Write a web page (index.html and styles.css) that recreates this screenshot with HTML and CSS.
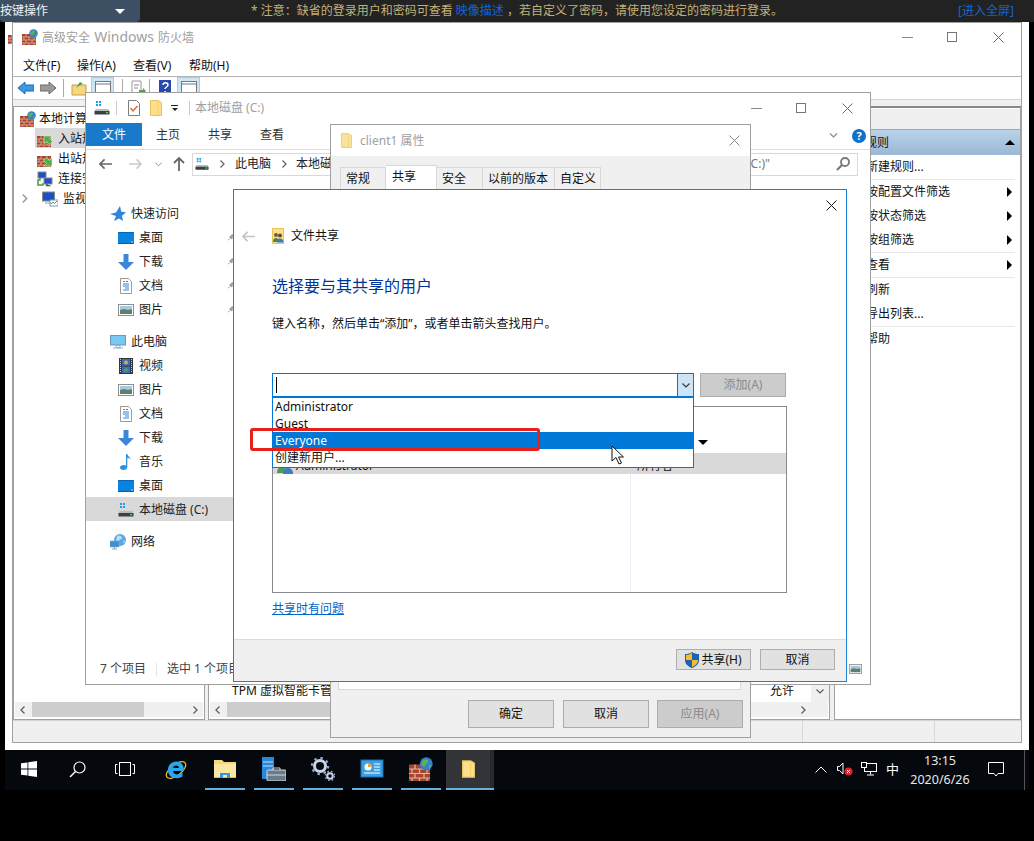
FILE: index.html
```html
<!DOCTYPE html>
<html lang="zh-CN">
<head>
<meta charset="utf-8">
<title>文件共享</title>
<link rel="stylesheet" href="styles.css">
</head>
<body>
<svg class="defs" aria-hidden="true">
  <symbol id="bricks" viewBox="0 0 16 16">
    <rect x="0" y="5" width="14" height="11" fill="#a8452f"/>
    <path d="M0 8h14M0 11h14M0 14h14M4 5v3M10 5v3M2 8v3M7 8v3M12 8v3M4 11v3M10 11v3M2 14v2M7 14v2M12 14v2" stroke="#e0b8a0" stroke-width=".8" fill="none"/>
  </symbol>
  <symbol id="firewall" viewBox="0 0 16 16">
    <use href="#bricks"/>
    <circle cx="11.5" cy="4.5" r="4.3" fill="#2f7fd6"/>
    <path d="M9 2.5c2-1.5 4-1 4 .5s-2 1-2 2.500-2 1-2.800-.5zM13 5l2 .5-1.500 2.500z" fill="#62b04a"/>
  </symbol>
  <symbol id="inbound" viewBox="0 0 16 16">
    <use href="#bricks"/>
    <path d="M7 5l8 0-2.500 2.500 3 3-3 3-3-3L7 13z" fill="#4fb04a" stroke="#e8f5e0" stroke-width=".5"/>
  </symbol>
  <symbol id="outbound" viewBox="0 0 16 16">
    <use href="#bricks"/>
    <path d="M15 15l-8 0 2.500-2.500-3-3 3-3 3 3L15 7z" fill="#4fb04a" stroke="#e8f5e0" stroke-width=".5"/>
  </symbol>
  <symbol id="connect" viewBox="0 0 16 16">
    <rect x="1" y="1" width="8" height="6" fill="#1a50c8" stroke="#8a8a8a"/>
    <rect x="7" y="7" width="8" height="6" fill="#1a50c8" stroke="#8a8a8a"/>
    <path d="M3 7v2h-2v5h5v-2" stroke="#4a9a3a" fill="none" stroke-width="1.500"/>
    <path d="M9 13v2h5" stroke="#9a9a9a"/>
  </symbol>
  <symbol id="monitor" viewBox="0 0 16 16">
    <rect x=".5" y="1" width="12" height="9" fill="#1a50c8" stroke="#8a8a8a"/>
    <rect x="8" y="9" width="8" height="6" fill="#fff" stroke="#7a9ac0"/>
    <path d="M9 13l2-2 1.500 1.500L15 10" stroke="#4aa03a" fill="none"/>
    <path d="M3 12h6" stroke="#9a9a9a"/>
  </symbol>
  <symbol id="drive" viewBox="0 0 16 16">
    <path d="M2 1h2v2H2zM5 1h2v2H5zM2 4h2v2H2zM5 4h2v2H5z" fill="#18a0e8"/>
    <path d="M1.500 9h13l1 2.500H.5z" fill="#b8bcc0"/>
    <rect x=".5" y="11" width="15" height="3.500" rx=".5" fill="#3c3f44"/>
    <rect x="12" y="12" width="2" height="1.300" fill="#50e060"/>
  </symbol>
  <symbol id="folder" viewBox="0 0 12 16">
    <path d="M.5.5h7.500l3.500 2v13H.5z" fill="#fbdf8a" stroke="#e6c35e"/>
    <path d="M8 2v13" stroke="#f2cf6c"/>
  </symbol>
  <symbol id="check" viewBox="0 0 12 16">
    <path d="M.5.5h8l3 3v12H.5z" fill="#fff" stroke="#7e7e7e"/>
    <path d="M2.500 8l2.500 3 4.500-5" stroke="#e0632a" stroke-width="1.400" fill="none"/>
  </symbol>
  <symbol id="desk" viewBox="0 0 16 12">
    <rect x="0" y="0" width="16" height="12" fill="#0a82e0"/>
    <rect x="0" y="0" width="16" height="1" fill="#0868b4"/>
    <path d="M0 12h16v-1H0z" fill="#0460a8"/><path d="M13 10h2" stroke="#9fd2f5"/>
  </symbol>
  <symbol id="down" viewBox="0 0 16 16">
    <path d="M5.500 0h5v8H16l-8 8-8-8h5.500z" fill="#3b87d8"/>
  </symbol>
  <symbol id="doc" viewBox="0 0 12 16">
    <path d="M.5.5h8l3 3v12H.5z" fill="#fff" stroke="#9a9a9a"/>
    <path d="M6 3.500h2M3 6h6M3 8h6M5 10h4M3 12h6" stroke="#2f88d8"/>
    <path d="M3 3.500h2" stroke="#888"/>
  </symbol>
  <symbol id="pics" viewBox="0 0 16 12">
    <rect x=".5" y=".5" width="15" height="11" fill="#fff" stroke="#8e8e8e"/>
    <rect x="2" y="2" width="12" height="4" fill="#a6c8e4"/>
    <path d="M2 6l4-1 4 1 4-1v5H2z" fill="#5b8268"/>
  </symbol>
  <symbol id="pc" viewBox="0 0 16 14">
    <rect x=".5" y=".5" width="15" height="9.500" fill="#79c8f2" stroke="#6a98b8"/>
    <path d="M6 10.500h4v2H6zM3 13h10" stroke="#8fb3c8" fill="none"/>
  </symbol>
  <symbol id="video" viewBox="0 0 14 16">
    <rect x="0" y="0" width="14" height="16" fill="#33363a"/>
    <rect x="3" y="1" width="8" height="6.500" fill="#3c6cc0"/>
    <rect x="3" y="8.500" width="8" height="6.500" fill="#3c6cc0"/>
    <circle cx="7" cy="4.500" r="2" fill="#d8a838"/><circle cx="7" cy="12" r="1.800" fill="#58a048"/>
    <path d="M1.500 1v14M12.500 1v14" stroke="#d0d0d0" stroke-dasharray="1 1"/>
  </symbol>
  <symbol id="note" viewBox="0 0 12 16">
    <path d="M6 0h1.300c.3 2.500 3 3 3.700 5.500-1-1-2.500-1.500-3.700-1.700V13c0 2-2 3-4 3S0 15 0 13.500 2 11 3.800 11c.8 0 1.600.2 2.200.5z" fill="#2d8fe0"/>
  </symbol>
  <symbol id="net" viewBox="0 0 16 16">
    <circle cx="10" cy="6" r="6" fill="#58a8e4"/>
    <path d="M7 2c2-1 5 0 5 2s-3 1-3 3-2 0-3-1zM13 7l2-.5-1 3z" fill="#b8dcf4"/>
    <rect x="0" y="7" width="9" height="6" fill="#3f8fd0" stroke="#7aa8c8" stroke-width=".6"/>
    <path d="M2 15h5M4.500 13v2" stroke="#8aa8bc"/>
  </symbol>
  <symbol id="star" viewBox="0 0 16 16">
    <path d="M10 0l1.200 5.500L16 6.500l-4 3.300 1 5.200-4-2.500-5 2.500 2-5L0 8l6-1.500z" fill="#2f86d8"/>
  </symbol>
  <symbol id="share" viewBox="0 0 12 16">
    <rect x=".5" y=".5" width="11" height="15" fill="#fbe08a" stroke="#e8c45c"/>
    <circle cx="4" cy="7" r="2" fill="#7a5a3a"/><path d="M1 14c0-3 1-4 3-4s3 1 3 4z" fill="#3f8a50"/>
    <circle cx="8" cy="7.500" r="2" fill="#6a4a30"/><path d="M5 14.500c0-3 1-4 3-4s3.500 1 3.500 4z" fill="#3a7cc0"/>
  </symbol>
  <symbol id="users" viewBox="0 0 16 16">
    <circle cx="5" cy="6" r="3" fill="#8a6a48"/><path d="M0 15c0-4 2-6 5-6s5 2 5 6z" fill="#4f9a58"/>
    <circle cx="11" cy="7" r="3" fill="#6a4a30"/><path d="M6 16c0-4 2-6 5-6s5 2 5 6z" fill="#3a7cc0"/>
  </symbol>
  <symbol id="shield" viewBox="0 0 14 16">
    <path d="M7 0c2 1.500 4 2 7 2v6c0 4-3 6.500-7 8-4-1.500-7-4-7-8V2c3 0 5-.5 7-2z" fill="#1d62b0"/>
    <path d="M7 1v7H1V3c2.500 0 4-1 6-2zM7 8h6c0 3.500-2.500 5.500-6 7z" fill="#f5bd2e"/>
  </symbol>
  <symbol id="ie" viewBox="0 0 24 24">
    <ellipse cx="12" cy="13" rx="11.500" ry="5.500" transform="rotate(-38 12 13)" fill="none" stroke="#e8b820" stroke-width="1.300"/>
    <path d="M4 13c0-5 3.500-8.500 8.500-8.500S20 8.500 20 14H9c.3 4 6 4.500 9.500 1.500v4c-4 2.500-9 2-12-.3C4.800 17.700 4 15.500 4 13zM9 11h6c-.2-3.300-5.700-3.300-6 0z" fill="#2aa6ea"/>
  </symbol>
  <symbol id="explorer" viewBox="0 0 24 24">
    <path d="M1 3h8l2 2h12v3H1z" fill="#f6d77c"/>
    <rect x="1" y="7" width="22" height="14" fill="#fbe7a0"/>
    <path d="M1 21h22v-1H1z" fill="#dcb95c"/>
    <path d="M7 21v-5h10v5h-3v-3h-4v3z" fill="#2f9be8"/>
    <path d="M7 16h10v2H7z" fill="#2f9be8"/>
  </symbol>
  <symbol id="server" viewBox="0 0 24 24">
    <rect x="0" y="0" width="12" height="22" fill="#2a88d8"/>
    <path d="M1 5h10M1 9h10" stroke="#bfe0f8"/>
    <rect x="5" y="13" width="19" height="11" rx="1" fill="#6a7a88" stroke="#d0d8e0"/>
    <path d="M11 13v-2h7v2M5 18h19" stroke="#d0d8e0" fill="none"/>
  </symbol>
  <symbol id="gears" viewBox="0 0 24 24">
    <circle cx="9" cy="9" r="5.500" fill="none" stroke="#c8d4e4" stroke-width="3"/>
    <circle cx="9" cy="9" r="8" fill="none" stroke="#93a6c4" stroke-width="2.400" stroke-dasharray="2.500 3.800"/>
    <circle cx="19" cy="19" r="2.800" fill="none" stroke="#c8d4e4" stroke-width="2"/>
    <circle cx="19" cy="19" r="4.500" fill="none" stroke="#93a6c4" stroke-width="1.600" stroke-dasharray="1.600 2"/>
  </symbol>
  <symbol id="panel" viewBox="0 0 24 24">
    <rect x="1" y="3" width="22" height="17" fill="#3aa0e4" stroke="#1a70b0"/>
    <circle cx="8" cy="10" r="3.500" fill="#fff"/><path d="M8 10V6.500A3.500 3.500 0 0 1 11.500 10z" fill="#f0a030"/>
    <path d="M14 7h6M14 10h6M14 13h6M4 16h16" stroke="#fff"/>
  </symbol>
  <symbol id="cursor" viewBox="0 0 14 21">
    <path d="M1 1v15l4-3.500L8 19l2.500-1-3-6H12.500z" fill="#fff" stroke="#111" stroke-width="1"/>
  </symbol>
  <symbol id="arrow-left" viewBox="0 0 14 12">
    <path d="M6 1L1 6l5 5M1 6h13" fill="none" stroke="currentColor" stroke-width="1.800"/>
  </symbol>
  <symbol id="arrow-right" viewBox="0 0 14 12">
    <path d="M8 1l5 5-5 5M13 6H0" fill="none" stroke="currentColor" stroke-width="1.800"/>
  </symbol>
  <symbol id="arrow-up" viewBox="0 0 12 14">
    <path d="M1 6l5-5 5 5M6 1v13" fill="none" stroke="currentColor" stroke-width="1.800"/>
  </symbol>
  <symbol id="x" viewBox="0 0 11 11"><path d="M.5.5l10 10M10.500.5l-10 10" stroke="currentColor" fill="none"/></symbol>
  <symbol id="chev" viewBox="0 0 8 5"><path d="M.5.5L4 4 7.500.5" stroke="currentColor" fill="none" stroke-width="1.100"/></symbol>
  <symbol id="chev-r" viewBox="0 0 5 8"><path d="M.5.5L4 4 .5 7.500" stroke="currentColor" fill="none" stroke-width="1.300"/></symbol>
  <symbol id="chev-l" viewBox="0 0 5 8"><path d="M4.500.5L1 4l3.500 3.500" stroke="currentColor" fill="none" stroke-width="1.300"/></symbol>
  <symbol id="tri-r" viewBox="0 0 5 10"><path d="M0 0l5 5-5 5z" fill="currentColor"/></symbol>
  <symbol id="pin" viewBox="0 0 5 7"><path d="M4.500 .5L1.500 3 4 5zM1.500 4.500L0 6.500" stroke="#888" fill="#aaa" stroke-width=".8"/></symbol>
  <symbol id="mag" viewBox="0 0 14 14"><circle cx="9" cy="5" r="4" fill="none" stroke="currentColor" stroke-width="1.800"/><path d="M6 8l-5 5" stroke="currentColor" stroke-width="2.200"/></symbol>
</svg>

<header class="topbar">
  <div class="keymenu"><span>按键操作</span><i class="keymenu-tri"></i></div>
  <p class="notice">* 注意：缺省的登录用户和密码可查看 <a class="notice-link">映像描述</a> ，若自定义了密码，请使用您设定的密码进行登录。</p>
  <a class="fullscreen">[进入全屏]</a>
</header>

<main class="desktop">
  <div class="behind"><svg class="ic16"><use href="#firewall"/></svg></div>

  <section class="win firewall">
    <div class="fw-title">
      <svg class="ic16"><use href="#firewall"/></svg>
      <span class="title-text">高级安全 <span class="title-latin">Windows</span> 防火墙</span>
      <div class="winbtns"><i class="min"></i><i class="max"></i><svg class="close"><use href="#x"/></svg></div>
    </div>
    <nav class="fw-menu"><span>文件(F)</span><span>操作(A)</span><span>查看(V)</span><span>帮助(H)</span></nav>
    <div class="fw-tools">
      <svg class="tool-arrow blue" viewBox="0 0 16 12"><path d="M7 0v3h9v6H7v3L0 6z"/></svg>
      <svg class="tool-arrow gray" viewBox="0 0 16 12"><path d="M9 0v3H0v6h9v3l7-6z"/></svg>
      <i class="tool-sep"></i>
      <svg class="tool-icon" viewBox="0 0 16 16"><path d="M1 5h14v10H1z" fill="#f4d77e" stroke="#c9a040"/><path d="M5 8l4-6 3 2-3 1z" fill="#3aa040"/></svg>
      <b class="tool-on"><svg class="tool-icon" viewBox="0 0 16 16"><rect x=".5" y="1.500" width="15" height="13" fill="#fff" stroke="#777"/><path d="M1 4h14" stroke="#777"/></svg></b>
      <i class="tool-sep"></i>
      <svg class="tool-icon" viewBox="0 0 16 16"><path d="M2 1h9v14H2z" fill="#fff" stroke="#999"/><path d="M4 5h5M4 8h4" stroke="#888"/><path d="M9 10h4V8l3 3-3 3v-2H9z" fill="#4aa840"/></svg>
      <i class="tool-sep"></i>
      <svg class="tool-icon help-ic" viewBox="0 0 16 16"><rect x="2" y="0" width="12" height="16" fill="#2848b0"/><path d="M6 5c0-3 5-3 5 0 0 2-3 2-3 4M8 11v2" stroke="#fff" stroke-width="1.500" fill="none"/></svg>
      <b class="tool-on"><svg class="tool-icon" viewBox="0 0 16 16"><rect x=".5" y="1.500" width="15" height="13" fill="#fff" stroke="#777"/><path d="M1 4h14" stroke="#777"/></svg></b>
    </div>
    <div class="fw-panes">
      <div class="pane pane-tree">
        <ul class="tree">
          <li><svg class="ic16"><use href="#firewall"/></svg>本地计算机</li>
          <li class="lv2 sel"><svg class="ic16"><use href="#inbound"/></svg>入站规则</li>
          <li class="lv2"><svg class="ic16"><use href="#outbound"/></svg>出站规则</li>
          <li class="lv2"><svg class="ic16"><use href="#connect"/></svg>连接安全规则</li>
          <li class="lv2 exp"><svg class="tree-chev"><use href="#chev-r"/></svg><svg class="ic16"><use href="#monitor"/></svg>监视</li>
        </ul>
        <div class="hscroll"><svg class="sb-arrow"><use href="#chev-l"/></svg><i class="thumb t-left"></i><svg class="sb-arrow end"><use href="#chev-r"/></svg></div>
      </div>
      <div class="pane pane-mid">
        <div class="mid-row"><span class="mid-name">TPM 虚拟智能卡管理</span><span class="mid-allow">允许</span><span class="mid-vs"><svg class="mid-down"><use href="#chev"/></svg></span></div>
        <div class="mid-bottom">
          <div class="hscroll"><svg class="sb-arrow"><use href="#chev-l"/></svg><i class="thumb t-mid"></i><svg class="sb-arrow end"><use href="#chev-r"/></svg></div>
        </div>
      </div>
      <div class="pane pane-act">
        <div class="act-band"></div>
        <div class="act-head"><span>入站规则</span><i class="tri-up"></i></div>
        <ul class="act-list">
          <li class="div">新建规则...</li>
          <li>按配置文件筛选<svg class="tri-r"><use href="#tri-r"/></svg></li>
          <li>按状态筛选<svg class="tri-r"><use href="#tri-r"/></svg></li>
          <li class="div">按组筛选<svg class="tri-r"><use href="#tri-r"/></svg></li>
          <li class="div">查看<svg class="tri-r"><use href="#tri-r"/></svg></li>
          <li>刷新</li>
          <li class="div">导出列表...</li>
          <li>帮助</li>
        </ul>
      </div>
    </div>
    <div class="fw-status"><i></i><i></i></div>
  </section>

  <section class="win explorer">
    <div class="ex-title">
      <svg class="ic16 drive-top"><use href="#drive"/></svg>
      <i class="qa-sep"></i>
      <svg class="qa-doc"><use href="#check"/></svg>
      <svg class="qa-folder"><use href="#folder"/></svg>
      <i class="qa-drop"></i>
      <i class="qa-sep second"></i>
      <span class="title-text">本地磁盘 (C:)</span>
      <div class="winbtns"><i class="min"></i><i class="max"></i><svg class="close"><use href="#x"/></svg></div>
    </div>
    <div class="ribbon">
      <span class="rb-file">文件</span><span class="rb-tab">主页</span><span class="rb-tab">共享</span><span class="rb-tab">查看</span>
      <svg class="rb-chev"><use href="#chev"/></svg>
      <span class="rb-help">?</span>
    </div>
    <div class="addr-row">
      <svg class="nav-btn"><use href="#arrow-left"/></svg>
      <svg class="nav-btn faint"><use href="#arrow-right"/></svg>
      <svg class="nav-drop"><use href="#chev"/></svg>
      <svg class="nav-up"><use href="#arrow-up"/></svg>
      <div class="addr-box">
        <svg class="ic14"><use href="#drive"/></svg>
        <svg class="crumb-sep"><use href="#chev-r"/></svg>
        <span>此电脑</span>
        <svg class="crumb-sep"><use href="#chev-r"/></svg>
        <span>本地磁盘 (C:)</span>
      </div>
      <div class="search-box"><span>搜索"本地磁盘 (C:)"</span><svg class="mag"><use href="#mag"/></svg></div>
    </div>
    <div class="ex-main">
      <ul class="navtree">
        <li class="top"><svg class="ic-nav"><use href="#star"/></svg>快速访问</li>
        <li><svg class="ic-nav"><use href="#desk"/></svg>桌面<svg class="pin"><use href="#pin"/></svg></li>
        <li><svg class="ic-nav"><use href="#down"/></svg>下载<svg class="pin"><use href="#pin"/></svg></li>
        <li><svg class="ic-nav"><use href="#doc"/></svg>文档<svg class="pin"><use href="#pin"/></svg></li>
        <li><svg class="ic-nav"><use href="#pics"/></svg>图片<svg class="pin"><use href="#pin"/></svg></li>
        <li class="top group"><svg class="ic-nav"><use href="#pc"/></svg>此电脑</li>
        <li><svg class="ic-nav"><use href="#video"/></svg>视频</li>
        <li><svg class="ic-nav"><use href="#pics"/></svg>图片</li>
        <li><svg class="ic-nav"><use href="#doc"/></svg>文档</li>
        <li><svg class="ic-nav"><use href="#down"/></svg>下载</li>
        <li><svg class="ic-nav"><use href="#note"/></svg>音乐</li>
        <li><svg class="ic-nav"><use href="#desk"/></svg>桌面</li>
        <li class="sel"><svg class="ic-nav"><use href="#drive"/></svg>本地磁盘 (C:)</li>
        <li class="top group"><svg class="ic-nav"><use href="#net"/></svg>网络</li>
      </ul>
    </div>
    <div class="ex-status">
      <span>7 个项目</span><i class="st-sep"></i><span>选中 1 个项目</span>
      <svg class="st-view"><use href="#pics"/></svg>
    </div>
  </section>

  <section class="win props">
    <div class="pr-title">
      <svg class="pr-folder"><use href="#folder"/></svg>
      <span class="title-text">client1 属性</span>
      <svg class="close pr-close"><use href="#x"/></svg>
    </div>
    <div class="pr-body">
      <div class="tabs">
        <span class="tab w46">常规</span><span class="tab on">共享</span><span class="tab w46">安全</span><span class="tab w72">以前的版本</span><span class="tab w46">自定义</span>
      </div>
      <div class="pr-panel"></div>
      <div class="pr-actions">
        <button class="btn big first-btn">确定</button><button class="btn big">取消</button><button class="btn big off">应用(A)</button>
      </div>
    </div>
  </section>

  <section class="win dialog">
    <div class="dlg-top"><svg class="close dlg-close"><use href="#x"/></svg></div>
    <div class="dlg-nav">
      <svg class="dlg-back"><use href="#arrow-left"/></svg>
      <svg class="dlg-share"><use href="#share"/></svg>
      <span>文件共享</span>
    </div>
    <div class="dlg-body">
      <h1>选择要与其共享的用户</h1>
      <p class="dlg-hint">键入名称，然后单击“添加”，或者单击箭头查找用户。</p>
      <div class="combo-row">
        <div class="combo">
          <i class="caret"></i>
          <span class="combo-btn"><svg class="combo-chev"><use href="#chev"/></svg></span>
          <ul class="dropdown">
            <li>Administrator</li>
            <li>Guest</li>
            <li class="hot">Everyone</li>
            <li>创建新用户...</li>
          </ul>
        </div>
        <button class="btn add" disabled>添加(A)</button>
      </div>
      <div class="share-list">
        <div class="sl-head"></div>
        <div class="sl-row"><span class="sl-tri"></span></div>
        <div class="sl-row gray"><span class="sl-name"><svg class="ic16"><use href="#users"/></svg>Administrator</span><span class="sl-level">所有者</span></div>
      </div>
      <a class="dlg-link">共享时有问题</a>
    </div>
    <div class="dlg-foot">
      <button class="btn small"><svg class="shield"><use href="#shield"/></svg>共享(H)</button>
      <button class="btn small">取消</button>
    </div>
  </section>

  <div class="redbox"></div>
  <svg class="cursor"><use href="#cursor"/></svg>
</main>

<footer class="taskbar">
  <div class="tb-cell"><svg class="tb-win" viewBox="0 0 16 16"><path d="M0 2.300l6.500-.9v6.200H0zM7.300 1.300L16 0v7.600H7.300zM0 8.400h6.500v6.200L0 13.700zM7.300 8.400H16V16l-8.700-1.300z" fill="#fff"/></svg></div>
  <div class="tb-cell"><svg class="tb-search" viewBox="0 0 17 17"><circle cx="10.500" cy="6.500" r="5.500" fill="none" stroke="#fff" stroke-width="1.200"/><path d="M6.500 10.500L1 16" stroke="#fff" stroke-width="1.400"/></svg></div>
  <div class="tb-cell"><svg class="tb-view" viewBox="0 0 20 14"><rect x="4.500" y=".5" width="11" height="13" fill="none" stroke="#fff"/><path d="M2.500 2.500H.5v9h2M17.500 2.500h2v9h-2" fill="none" stroke="#fff"/></svg></div>
  <div class="tb-cell app first"><svg class="tb-app"><use href="#ie"/></svg></div>
  <div class="tb-cell app run"><svg class="tb-app"><use href="#explorer"/></svg></div>
  <div class="tb-cell app run"><svg class="tb-app"><use href="#server"/></svg></div>
  <div class="tb-cell app run"><svg class="tb-app"><use href="#gears"/></svg></div>
  <div class="tb-cell app run"><svg class="tb-app"><use href="#panel"/></svg></div>
  <div class="tb-cell app run"><svg class="tb-app"><use href="#firewall"/></svg></div>
  <div class="tb-cell app active"><svg class="tb-folder"><use href="#folder"/></svg></div>
  <div class="tray">
    <svg class="tr-up" viewBox="0 0 12 7"><path d="M.5 6.500L6 1l5.500 5.500" fill="none" stroke="#fff"/></svg>
    <svg class="tr-sound" viewBox="0 0 16 14"><path d="M.5 4.500h2L6 1v11L2.500 8.500h-2z" fill="none" stroke="#fff"/><circle cx="11.500" cy="9.500" r="4" fill="#d8242c"/><path d="M10 8l3 3M13 8l-3 3" stroke="#fff"/></svg>
    <svg class="tr-net" viewBox="0 0 16 14"><rect x="3.500" y="1.500" width="12" height="8" fill="none" stroke="#fff"/><rect x=".5" y=".5" width="5" height="5" fill="#05090d" stroke="#fff"/><path d="M9.500 9.500v3M6 13h7" stroke="#fff"/></svg>
    <span class="tr-ime">中</span>
    <div class="clock"><span>13:15</span><span>2020/6/26</span></div>
    <svg class="tr-note" viewBox="0 0 16 15"><path d="M.5.500h15v11H10L8 14l-2-2.500H.5z" fill="none" stroke="#fff"/></svg>
    <i class="tr-edge"></i>
  </div>
</footer>
</body>
</html>
```

FILE: styles.css
```css
* { box-sizing: border-box; }
html, body { margin: 0; padding: 0; }
body {
  width: 1034px; height: 841px; overflow: hidden; background: #000;
  font: 12px/16px "Noto Sans", "Noto Sans CJK SC", sans-serif; color: #111;
}
.defs { position: absolute; width: 0; height: 0; }
svg { display: block; flex: none; }
ul { list-style: none; margin: 0; padding: 0; }
i { display: block; flex: none; }
h1, p { margin: 0; font-weight: 400; }

/* top bar */
.topbar { height: 22px; background: #222; display: flex; align-items: center; color: #c3b178; }
.keymenu {
  width: 140px; height: 22px; background: #3c4f63; border-radius: 0 0 4px 4px; color: #f2f2f2;
  display: flex; align-items: center; justify-content: space-between; padding-right: 15px;
}
.keymenu-tri { width: 0; height: 0; border: 5px solid transparent; border-top: 5px solid #fff; border-bottom: 0; }
.notice { margin-left: 111px; white-space: pre-wrap; }
.notice-link { color: #0f66dc; }
.fullscreen { margin-left: auto; margin-right: 20px; color: #1a63c8; }

/* desktop */
.desktop { position: relative; width: 1024px; height: 728px; margin-left: 5px; background: #fff; }
.win { position: absolute; background: #fff; border: 1px solid #a0a0a0; display: flex; flex-direction: column; }
.behind { position: absolute; left: 3px; top: 8px; width: 4px; height: 14px; overflow: hidden; }
.ic16 { width: 16px; height: 16px; }
.ic14 { width: 14px; height: 14px; }
.title-text { color: #a0a0a0; white-space: nowrap; }
.close { width: 11px; height: 11px; color: #6a6a6a; }
.winbtns { display: flex; align-items: center; margin-left: auto; }
.min { width: 11px; height: 1px; background: #888; }
.max { width: 10px; height: 10px; border: 1px solid #777; margin-left: 34px; }
.winbtns .close { margin-left: 36px; }

/* firewall */
.firewall { left: 7px; top: 0; width: 1010px; height: 721px; }
.fw-title { height: 25px; display: flex; align-items: center; padding: 3px 17px 0 9px; flex: none; }
.fw-title .title-text { margin-left: 4px; word-spacing: 1px; }
.title-latin { font-size: 14px; }
.fw-menu { height: 29px; border-bottom: 1px solid #b4b4b4; display: flex; gap: 16px; padding: 7px 0 0 10px; flex: none; align-items: center; white-space: nowrap; }
.fw-menu span { width: 40px; }
.fw-menu span:first-child { width: 38px; }
.fw-tools { height: 22px; display: flex; align-items: center; padding-left: 5px; flex: none; }
.tool-arrow { width: 16px; height: 12px; margin-right: 6px; }
.tool-arrow.blue path { fill: #3a9ae0; stroke: #1a6cb4; }
.tool-arrow.gray path { fill: #9a9a9a; stroke: #6a6a6a; }
.tool-sep { width: 1px; height: 18px; background: #aaa; margin: 0 7px 0 1px; }
.tool-icon { width: 16px; height: 16px; }
.tool-on { display: flex; align-items: center; justify-content: center; width: 23px; height: 22px; background: #cde6f7; border: 1px solid #9fcff0; margin: 0 7px 0 2px; }
.fw-tools > .tool-icon { margin-right: 2px; }
.fw-panes { flex: 1; min-height: 0; display: flex; background: #f0f0f0; border-top: 1px solid #d4d4d4; padding-top: 6px; gap: 3px; }
.pane { background: #fff; border: 1px solid #a0a0a0; display: flex; flex-direction: column; min-width: 0; box-shadow: inset 0 -2px 0 #fff; }
.pane-tree { width: 192px; }
.tree { flex: 1; padding-top: 1px; }
.tree li { height: 20px; display: flex; align-items: center; gap: 3px; padding: 1px 0 0 6px; }
.tree .lv2 { padding-left: 23px; gap: 5px; }
.tree .sel { background: #d9d9d9; margin-left: 21px; padding-left: 2px; }
.tree .exp { padding-left: 8px; }
.tree-chev { width: 6px; height: 9px; color: #999; margin-right: 9px; }
.hscroll { height: 15px; margin: 0 1px 2px; background: #f0f0f0; display: flex; align-items: center; padding: 0 5px; flex: none; color: #606060; }
.sb-arrow { width: 5px; height: 8px; }
.sb-arrow.end { margin-left: auto; }
.thumb { height: 15px; background: #cdcdcd; margin-left: 7px; }
.t-left { width: 112px; }
.t-mid { width: 500px; }
.pane-mid { width: 622px; justify-content: flex-end; }
.mid-row { height: 22px; display: flex; align-items: stretch; padding-left: 23px; white-space: nowrap; line-height: 22px; }
.mid-name { width: 538px; flex: none; }
.mid-allow { flex: 1; }
.mid-vs { width: 18px; flex: none; background: #f0f0f0; display: flex; align-items: center; justify-content: center; }
.mid-down { width: 8px; height: 5px; color: #555; }
.mid-bottom { background: #f0f0f0; margin: 0 1px 2px; }
.mid-bottom .hscroll { margin: 0 17px 0 0; }
.pane-act { flex: 1; margin-left: 1px; border-top-width: 2px; border-top-color: #888; }
.act-band { height: 21px; background: #f0f0f0; border-bottom: 1px solid #a8a8a8; flex: none; margin-top: 1px; }
.act-head { height: 25px; background: linear-gradient(#bad3ea, #9ab7d5); display: flex; align-items: center; justify-content: space-between; padding: 0 5px 0 6px; flex: none; }
.tri-up { width: 0; height: 0; border: 5px solid transparent; border-bottom: 5px solid #000; border-top: 0; }
.act-list { padding: 0 5px 0 31px; }
.act-list li { height: 24px; display: flex; align-items: center; justify-content: space-between; }
.act-list .div { height: 25px; border-bottom: 1px solid #e8e8e8; }
.tri-r { width: 5px; height: 10px; color: #000; margin-right: 3px; }
.fw-status { height: 22px; flex: none; background: #f0f0f0; border-top: 1px solid #d4d4d4; display: flex; justify-content: flex-end; }
.fw-status i { width: 87px; border-left: 1px solid #d8d8d8; }
.fw-status i:first-child { width: 132px; }

/* explorer */
.explorer { left: 80px; top: 70px; width: 786px; height: 593px; }
.ex-title { height: 30px; display: flex; align-items: center; padding: 0 17px 0 8px; flex: none; }
.drive-top { margin-right: 6px; }
.qa-sep { width: 1px; height: 14px; background: #c8c8c8; }
.qa-sep.second { margin: 0 5px 0 0; }
.qa-doc { width: 12px; height: 16px; margin-left: 11px; }
.qa-folder { width: 12px; height: 16px; margin-left: 10px; }
.qa-drop { width: 7px; height: 6px; margin: 0 11px 0 9px; border-top: 1px solid #222; }
.qa-drop::after { content: ""; display: block; margin: 2px auto 0; width: 0; height: 0; border: 3.500px solid transparent; border-top: 3.500px solid #222; border-bottom: 0; }
.ribbon { height: 27px; display: flex; border-bottom: 1px solid #dcdcdc; flex: none; align-items: flex-start; color: #333; }
.rb-file { width: 56px; height: 23px; background: #1979ca; color: #fff; display: flex; align-items: center; justify-content: center; }
.rb-tab { height: 23px; display: flex; align-items: center; margin-left: 14px; width: 24px; white-space: nowrap; }
.rb-tab + .rb-tab { margin-left: 28px; }
.rb-chev { width: 9px; height: 5px; color: #888; margin: 10px 0 0 auto; }
.rb-help { width: 14px; height: 14px; margin: 6px 4px 0 14px; border-radius: 50%; background: #1070c8; color: #fff; font-weight: 700; font-size: 11px; line-height: 14px; text-align: center; }
.addr-row { height: 34px; display: flex; align-items: center; padding: 0 12px 6px 13px; flex: none; color: #666; }
.nav-btn { width: 13px; height: 12px; margin-right: 17px; }
.nav-btn.faint { color: #ccc; margin-right: 13px; }
.nav-drop { width: 7px; height: 5px; color: #888; margin-right: 11px; }
.nav-up { width: 12px; height: 14px; margin-right: 7px; }
.addr-box { flex: 1; height: 23px; border: 1px solid #d9d9d9; display: flex; align-items: center; padding-left: 2px; color: #222; white-space: nowrap; overflow: hidden; }
.crumb-sep { width: 5px; height: 8px; color: #666; margin: 0 9px 0 11px; }
.addr-box .ic14 + .crumb-sep { margin: 0 10px 0 11px; }
.search-box { width: 225px; height: 23px; border: 1px solid #d9d9d9; border-left: 0; display: flex; align-items: center; justify-content: space-between; padding: 0 7px 0 34px; color: #777; white-space: nowrap; }
.mag { width: 14px; height: 14px; color: #777; }
.ex-main { flex: 1; min-height: 0; padding-top: 17px; }
.navtree { width: 148px; }
.navtree li { height: 24px; display: flex; align-items: center; padding: 1px 0 0 32px; color: #222; }
.navtree .top { padding-left: 24px; }
.navtree .group { margin-top: 8px; }
.navtree .sel { background: #d9d9d9; }
.ic-nav { width: 16px; height: 16px; margin-right: 5px; }
.pin { width: 5px; height: 7px; margin-left: auto; margin-right: 1px; }
.ex-status { height: 24px; display: flex; align-items: center; padding: 0 8px 6px 14px; color: #444; flex: none; white-space: nowrap; }
.st-sep { width: 1px; height: 13px; background: #e4e4e4; margin: 0 10px; }
.st-view { width: 13px; height: 10px; margin-left: auto; }

/* properties */
.props { left: 325px; top: 102px; width: 421px; height: 614px; }
.pr-title { height: 31px; display: flex; align-items: center; padding: 0 10px; flex: none; }
.pr-folder { width: 11px; height: 15px; margin-right: 8px; opacity: .85; }
.pr-close { margin-left: auto; color: #888; }
.pr-body { flex: 1; background: #f0f0f0; padding: 10px 7px 0; display: flex; flex-direction: column; }
.tabs { display: flex; height: 24px; margin-left: 2px; align-items: flex-end; flex: none; }
.tab { height: 23px; border: 1px solid #d8d8d8; border-left: 0; display: flex; align-items: center; padding-left: 5px; background: #f0f0f0; white-space: nowrap; }
.tab:first-child { border-left: 1px solid #d8d8d8; }
.w46 { width: 46px; }
.w72 { width: 72px; }
.tab.on { width: 51px; height: 25px; background: #fff; border-bottom: 0; padding: 0 0 3px 6px; }
.pr-panel { width: 403px; height: 500px; background: #fff; border: 1px solid #d8d8d8; flex: none; }
.pr-actions { display: flex; justify-content: flex-end; gap: 8px; margin-top: 10px; }
.btn { font: inherit; color: #111; background: #e1e1e1; border: 1px solid #adadad; display: flex; align-items: center; justify-content: center; padding: 0; }
.btn.big { width: 86px; height: 28px; }
.btn.first-btn { margin-right: 1px; }
.btn.off { background: #ccc; color: #8a8a8a; }

/* share dialog */
.dialog { left: 228px; top: 167px; width: 614px; height: 493px; border-color: #1883d7; }
.dlg-top { height: 30px; display: flex; justify-content: flex-end; align-items: center; padding: 0 9px 0 0; flex: none; }
.dlg-close { color: #111; }
.dlg-nav { height: 20px; margin-top: 6px; display: flex; align-items: center; padding-left: 8px; flex: none; }
.dlg-back { width: 13px; height: 11px; color: #c4c4c4; margin-right: 17px; }
.dlg-share { width: 12px; height: 16px; margin-right: 7px; }
.dlg-body { padding-left: 38px; flex: 1; display: flex; flex-direction: column; align-items: flex-start; }
.dlg-body h1 { font-size: 16px; line-height: 20px; color: #003399; margin-top: 30px; }
.dlg-hint { margin-top: 20px; }
.combo-row { display: flex; gap: 6px; margin-top: 41px; height: 24px; }
.combo { width: 422px; height: 24px; border: 1px solid #0078d7; position: relative; display: flex; align-items: center; justify-content: space-between; padding-left: 3px; }
.caret { width: 1px; height: 16px; background: #000; }
.combo-btn { width: 16px; height: 22px; background: #cce4f7; border-left: 1px solid #0078d7; display: flex; align-items: center; justify-content: center; }
.combo-chev { width: 8px; height: 5px; color: #333; }
.dropdown { position: absolute; left: -1px; right: -1px; top: 23px; height: 71px; background: #fff; border: 1px solid #0078d7; z-index: 2; }
.dropdown li { height: 17px; line-height: 17px; padding-left: 2px; }
.dropdown .hot { background: #0078d7; color: #fff; }
.add { width: 86px; height: 24px; background: #ccc; color: #8a8a8a; }
.share-list { width: 515px; height: 187px; margin-top: 9px; border: 1px solid #868a8e; position: relative; }
.share-list::before { content: ""; position: absolute; left: 357px; top: 0; bottom: 0; width: 1px; background: #e6eef8; }
.sl-head { height: 25px; }
.sl-row { height: 21px; position: relative; display: flex; align-items: center; }
.sl-row.gray { background: #d9d9d9; padding-top: 4px; }
.sl-name { display: flex; align-items: center; width: 364px; padding-left: 4px; gap: 3px; }
.sl-tri { width: 0; height: 0; margin-left: 425px; border: 5px solid transparent; border-top: 5px solid #000; border-bottom: 0; }
.dlg-link { margin-top: 8px; color: #0066cc; text-decoration: underline; }
.dlg-foot { height: 42px; flex: none; background: #f0f0f0; border-top: 1px solid #dcdcdc; display: flex; justify-content: flex-end; gap: 9px; padding: 9px 11px 0 0; }
.btn.small { width: 75px; height: 21px; gap: 2px; }
.shield { width: 14px; height: 16px; }

/* overlays */
.redbox { position: absolute; left: 245px; top: 406px; width: 290px; height: 23px; border: 3px solid #e8201a; border-radius: 3px; z-index: 3; }
.cursor { position: absolute; left: 606px; top: 423px; width: 14px; height: 21px; z-index: 4; }

/* taskbar */
.taskbar { height: 40px; margin-left: 5px; width: 1024px; background: #05090d; display: flex; }
.tb-cell { width: 48px; height: 40px; display: flex; align-items: center; justify-content: center; flex: none; position: relative; padding-bottom: 2px; }
.tb-win { width: 16px; height: 16px; }
.tb-search { width: 17px; height: 17px; }
.tb-view { width: 20px; height: 14px; }
.app { width: 49px; }
.app.first { margin-left: 2px; }
.tb-app { width: 24px; height: 24px; }
.run::after, .active::after { content: ""; position: absolute; left: 5px; right: 4px; bottom: 0; height: 2px; background: #6aaedc; }
.app.active { width: 48px; background: #333437; margin-left: 1px; border-right: 4px solid #28292c; }
.active::after { left: 0; right: -4px; }
.tb-folder { width: 13px; height: 20px; }
.tray { margin-left: auto; display: flex; align-items: center; color: #fff; padding: 0 4px 2px 0; }
.tr-up { width: 12px; height: 7px; margin-right: 10px; }
.tr-sound { width: 16px; height: 14px; margin-right: 8px; }
.tr-net { width: 16px; height: 14px; margin-right: 9px; }
.tr-ime { font-size: 13px; margin-right: 6px; }
.clock { width: 70px; display: flex; flex-direction: column; align-items: center; line-height: 19px; color: #e8e8e8; font-size: 12.5px; padding-top: 1px; white-space: nowrap; }
.tr-note { width: 16px; height: 15px; margin: 0 20px 0 13px; }
.tr-edge { width: 1px; height: 40px; background: #555; margin-top: 2px; }
```
